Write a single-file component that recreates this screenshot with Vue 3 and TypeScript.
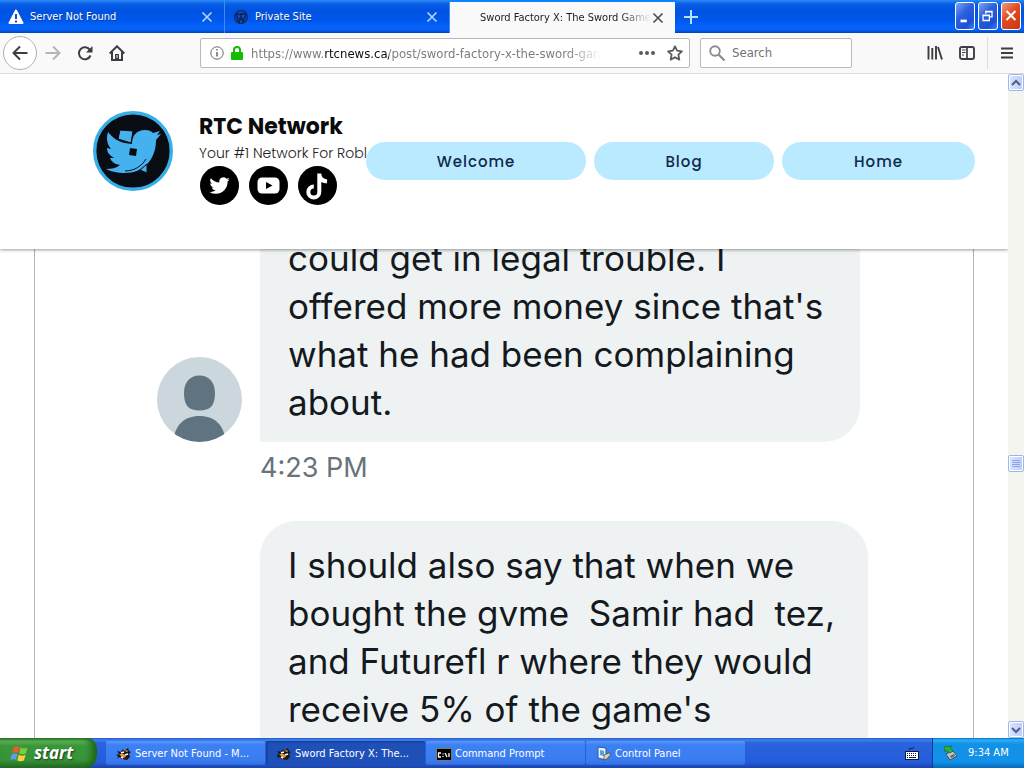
<script setup lang="ts">
import { ref } from 'vue'

interface Message { lines: string[]; time?: string; avatar: boolean }

const address = ref('https://www.rtcnews.ca/post/sword-factory-x-the-sword-game')
const query = ref('')
const active = ref(2)
const tabs = [
  { title: 'Server Not Found', icon: 'warn' },
  { title: 'Private Site', icon: 'wp' },
  { title: 'Sword Factory X: The Sword Game', icon: 'none' },
]
const links = ['Welcome', 'Blog', 'Home']
const messages: Message[] = [
  {
    lines: ['could get in legal trouble. I', "offered more money since that's", 'what he had been complaining', 'about.'],
    time: '4:23 PM',
    avatar: true,
  },
  {
    lines: ['I should also say that when we', 'bought the gvme\u00a0 Samir had\u00a0 tez,', 'and Futurefl\u00a0r where they would', "receive 5% of the game's"],
    avatar: false,
  },
]
const tasks = [
  { title: 'Server Not Found - M...', icon: 'fox', on: false },
  { title: 'Sword Factory X: The...', icon: 'fox', on: true },
  { title: 'Command Prompt', icon: 'cmd', on: false },
  { title: 'Control Panel', icon: 'panel', on: false },
]
</script>

<template>
  <div class="desktop">
    <div class="tabbar">
      <div v-for="(t, i) in tabs" :key="t.title" class="tab" :class="{ active: active === i }">
        <button class="tab-main" @click="active = i">
          <svg v-if="t.icon === 'warn'" class="fav" viewBox="0 0 16 16"><path d="M8 1.5 1.5 14h13z" fill="#fff" stroke="#fff" stroke-width="2" stroke-linejoin="round" /><path d="M8 5v5M8 11.5v2" stroke="#0b50d8" stroke-width="2" /></svg>
          <svg v-else-if="t.icon === 'wp'" class="fav" viewBox="0 0 16 16"><circle cx="8" cy="8" r="6.4" fill="none" stroke="#10285f" stroke-width="1.3" /><path d="M3 5.2 6 13l2-5.5L10 13l2.5-6.3c.5-1.4-.8-2-.4-3.2M2 5h4M6.500 5h4.500M7 5l1 3M10 5" fill="none" stroke="#10285f" stroke-width="1.9" /></svg>
          <span v-else class="fav"></span>
          <span class="tab-title">{{ t.title }}</span>
        </button>
        <button class="close" aria-label="Close tab"><svg viewBox="0 0 12 12"><path d="m1.500 1.500 9 9m0-9-9 9" stroke="currentColor" stroke-width="1.600" /></svg></button>
      </div>
      <button class="plus" aria-label="New tab"><svg viewBox="0 0 14 14"><path d="M7 0v14M0 7h14" stroke="#b9e2ff" stroke-width="2" /></svg></button>
      <div class="winbtns">
        <button aria-label="Minimize"><svg viewBox="0 0 20 27"><path d="M5 19h7" stroke="#fff" stroke-width="3" /></svg></button>
        <button aria-label="Restore"><svg viewBox="0 0 20 27"><path d="M7.500 11V8.500h7v6H12M4.500 12.500h7v6h-7zM7 9h8M4 13h8" fill="none" stroke="#fff" stroke-width="1.400" /></svg></button>
        <button class="red" aria-label="Close"><svg viewBox="0 0 20 27"><path d="m5 8 10 10m0-10L5 18" stroke="#fff" stroke-width="2.200" /></svg></button>
      </div>
    </div>

    <div class="toolbar">
      <button class="back" aria-label="Back"><svg viewBox="0 0 16 16"><path d="M15.500 8H1.500M8 1.500 1.500 8 8 14.500" fill="none" stroke="#3d3d42" stroke-width="2" /></svg></button>
      <button class="tool" aria-label="Forward"><svg viewBox="0 0 16 16"><path d="M.5 8h14M8 1.500 14.500 8 8 14.500" fill="none" stroke="#b5b5b7" stroke-width="2" /></svg></button>
      <button class="tool" aria-label="Reload"><svg viewBox="0 0 16 16"><path d="M13 5A6 6 0 1 0 13.500 10.500" fill="none" stroke="#3d3d42" stroke-width="2" /><path d="M15.500 1v6.500H9z" fill="#3d3d42" /></svg></button>
      <button class="tool" aria-label="Home page"><svg viewBox="0 0 16 16"><path d="M.7 8.500 8 1.300l7.300 7.200M3 7v8h10V7" fill="none" stroke="#3d3d42" stroke-width="2" /><path d="M6 9h4v6H6z" fill="#3d3d42" /><path d="M8 10v3" stroke="#f9f9fa" stroke-width="1" /></svg></button>
      <div class="urlbox">
        <svg class="i14" viewBox="0 0 14 14"><circle cx="7" cy="7" r="6.200" fill="none" stroke="#68686c" /><path d="M7 6v4.500M7 3v1.600" stroke="#68686c" stroke-width="1.500" /></svg>
        <svg class="lock" viewBox="0 0 12 14"><path d="M3 7V4a3 3 0 0 1 6 0v3" fill="none" stroke="#12bc00" stroke-width="2" /><rect y="6" width="12" height="8" rx="1" fill="#12bc00" /></svg>
        <input v-model="address" class="url" aria-label="Address" spellcheck="false" />
        <button class="mini" aria-label="Page actions"><svg viewBox="0 0 16 16"><g fill="#5a5a5e"><circle cx="2" cy="8" r="2" /><circle cx="8" cy="8" r="2" /><circle cx="14" cy="8" r="2" /></g></svg></button>
        <button class="mini" aria-label="Bookmark"><svg viewBox="0 0 16 16"><path d="m8 1.300 2.100 4.400 4.800.6-3.500 3.400.9 4.900L8 12.200l-4.300 2.400.9-4.900L1.100 6.300l4.800-.6z" fill="none" stroke="#5a5a5e" stroke-width="1.800" stroke-linejoin="round" /></svg></button>
      </div>
      <div class="searchbox">
        <svg class="i16" viewBox="0 0 16 16"><circle cx="6" cy="6" r="4.800" fill="none" stroke="#8b8b8e" stroke-width="1.900" /><path d="m9.500 9.500 6 6" stroke="#8b8b8e" stroke-width="2.200" /></svg>
        <input v-model="query" placeholder="Search" aria-label="Search" />
      </div>
      <div class="tools-right">
        <button class="tool" aria-label="Library"><svg viewBox="0 0 16 16"><path d="M1.500 1v13.500M5.300 3v11.500M9 1v13.500M11 2l4 12.500" stroke="#3d3d42" stroke-width="1.900" /></svg></button>
        <button class="tool" aria-label="Sidebars"><svg viewBox="0 0 16 16"><rect x="1" y="2" width="14" height="12" rx="2" fill="none" stroke="#3d3d42" stroke-width="1.900" /><path d="M8 2v12" stroke="#3d3d42" stroke-width="1.700" /><path d="M3 5h3.500M3 7.500h3.500M3 10h2" stroke="#3d3d42" /></svg></button>
        <button class="tool menu" aria-label="Menu"><svg viewBox="0 0 16 16"><path d="M2 3.500h12M2 8h12M2 12.500h12" stroke="#3d3d42" stroke-width="2" /></svg></button>
      </div>
    </div>

    <div class="viewport">
      <div class="page">
        <header class="site-head">
          <svg class="logo" viewBox="0 0 80 80">
            <circle cx="40" cy="40" r="38.300" fill="#0a0c14" stroke="#38aee9" stroke-width="3.400" />
            <path d="M15 21c7 9 14 11 24 12 0-9 5-14 13-14 4 0 6 1 8 3l7-2-3 4 4-1-5 6c0 20-13 33-31 33-8 0-15-2-19-4 6 0 10-1 14-4-6-1-9-4-10-7h4c-5-3-7-6-7-10l4 1c-4-5-5-10-3-17z" fill="#45b1ee" />
            <path d="m27 19 13 1-2 12-13-4z" fill="#45b1ee" stroke="#0a0c14" stroke-width="1" /><path d="m37 37 7 1-1 7-7-1z" fill="#0a0c14" /><path d="M32 60c9 0 17-5 21-12" fill="none" stroke="#0a0c14" stroke-width="1" /><path d="m47 59 7-6v9z" fill="#45b1ee" stroke="#0a0c14" stroke-width="1" />
          </svg>
          <div class="brand">
            <h1>RTC Network</h1>
            <p>Your #1 Network For Robl</p>
            <div class="social">
              <a href="#twitter" aria-label="Twitter"><svg viewBox="0 0 39 39"><circle cx="19.500" cy="19.500" r="19.500" /><path transform="translate(9.500 9.500) scale(.84)" fill="#fff" d="M23.950 4.570a10 10 0 0 1-2.820.780 4.960 4.960 0 0 0 2.160-2.730c-.95.560-2 .970-3.130 1.190a4.920 4.920 0 0 0-8.390 4.490A14 14 0 0 1 1.640 3.160a4.920 4.920 0 0 0 1.520 6.570 4.900 4.900 0 0 1-2.230-.61v.06a4.920 4.920 0 0 0 3.950 4.830 5 5 0 0 1-2.210.080 4.940 4.940 0 0 0 4.600 3.420A9.870 9.870 0 0 1 0 19.540a14 14 0 0 0 7.550 2.210c9.050 0 14-7.500 14-13.980v-.64a10 10 0 0 0 2.400-2.560z" /></svg></a>
              <a href="#youtube" aria-label="YouTube"><svg viewBox="0 0 39 39"><circle cx="19.500" cy="19.500" r="19.500" /><rect x="8.500" y="11.500" width="22" height="16" rx="4.500" fill="#fff" /><path d="m17 16 6.500 3.500L17 23z" /></svg></a>
              <a href="#tiktok" aria-label="TikTok"><svg viewBox="0 0 39 39"><circle cx="19.500" cy="19.500" r="19.500" /><path d="M21.300 7.500v18.500a5.500 5.500 0 1 1-5.500-5.500M21.300 8c.3 4.500 3 7 7.700 7.500" fill="none" stroke="#fff" stroke-width="4" /></svg></a>
            </div>
          </div>
          <nav><a v-for="l in links" :key="l" :href="'#' + l.toLowerCase()">{{ l }}</a></nav>
        </header>
        <main class="article">
          <section v-for="(m, i) in messages" :key="i" class="message">
            <div class="row">
              <svg v-if="m.avatar" class="avatar" viewBox="0 0 85 85"><defs><clipPath id="face"><circle cx="42.500" cy="42.500" r="42.500" /></clipPath></defs><g clip-path="url(#face)"><path d="M0 0h85v85H0z" fill="#ccd6dd" /><path d="M42.500 18.500c9.500 0 15.500 7 15.500 17.500 0 13-5 17.500-15.500 17.500S27 49 27 36c0-10.500 6-17.500 15.500-17.500zM16 85c2-17 11-26 26.500-26S67 68 69 85z" fill="#5f7480" /></g></svg>
              <span v-else class="avatar"></span>
              <p class="bubble" :class="m.avatar ? 'tail' : 'wide'"><span v-for="line in m.lines" :key="line">{{ line }}</span></p>
            </div>
            <time v-if="m.time">{{ m.time }}</time>
          </section>
        </main>
      </div>
      <div class="scroll">
        <button aria-label="Scroll up"><svg viewBox="0 0 10 10"><path d="m1 7 4-4 4 4" fill="none" stroke="#4d6185" stroke-width="2" /></svg></button>
        <div class="above"></div>
        <button aria-label="Scroll position"><svg viewBox="0 0 10 10"><path d="M1 1.500h8M1 3.500h8M1 5.500h8M1 7.500h8" stroke="#8fa6e0" /></svg></button>
        <div class="below"></div>
        <button aria-label="Scroll down"><svg viewBox="0 0 10 10"><path d="m1 3 4 4 4-4" fill="none" stroke="#4d6185" stroke-width="2" /></svg></button>
      </div>
    </div>

    <footer class="taskbar">
      <button class="start">
        <svg viewBox="0 0 18 18"><path d="M3.500 3C6 1.500 7.500 2 9 3L7.500 8.500C6 7.500 4.500 7.500 2 8.500z" fill="#f0592b" /><path d="M10 3.300c2 1.200 4 1.200 6.500 0L15 9c-2.500 1-4.500 1-6.300 0z" fill="#7fcc3c" /><path d="M1.700 9.700c2.500-1 4-1 5.500 0L5.700 15c-1.500-1-3-1-5.500 0z" fill="#5b9cf5" /><path d="M8.300 10.200c2 1.100 4 1.100 6.400 0l-1.500 5.500c-2.500 1-4.500 1-6.300 0z" fill="#fbd137" /></svg>
        start
      </button>
      <div class="tasks">
        <button v-for="t in tasks" :key="t.title" :class="{ on: t.on }">
          <svg v-if="t.icon === 'fox'" viewBox="0 0 16 16"><path d="m1 5 4 1 2-3 1 2 4-3 1 3 2 1-2 2 1 3-3 3-5-1-3-2-2 2 1-3-2-1 3-1z" fill="#1c1714" /><path d="M3 8h5l2 3-3 1M8 5l3-1 1 2" fill="#e39a35" /><path d="m5 7 3-1M9 9l3-1M5 11l2 1" stroke="#fff" stroke-width="1.500" /></svg>
          <svg v-else-if="t.icon === 'cmd'" viewBox="0 0 16 16"><rect x=".5" y="2.500" width="15" height="12" fill="#000" stroke="#777" /><path d="M5 7H2.500v4H5M7 7.500v1M7 10v1M9 7l2 4M13 7v4" fill="none" stroke="#fff" stroke-width="1.300" /></svg>
          <svg v-else viewBox="0 0 16 16"><path d="m2 1 8 1v12l-8-2z" fill="#e9f0fb" stroke="#31549a" /><path d="m4 4 4 1v5L4 9z" fill="#4aa3e8" /><path d="m8 9 5-2 2 1-4 5-3 1z" fill="#d9d4a8" stroke="#444" stroke-width=".7" /></svg>
          <span>{{ t.title }}</span>
        </button>
      </div>
      <svg class="keyb" viewBox="0 0 14 14"><path d="M4 4c0-3 4 0 5-3" fill="none" stroke="#10183c" /><rect x=".5" y="5.500" width="13" height="8" fill="#fff" stroke="#10183c" /><path d="M2 7.500h10M2 9.500h10" stroke="#10183c" stroke-dasharray="1 1" /><path d="M2 11.500h10" stroke="#10183c" stroke-dasharray="1 1 7 1" /></svg>
      <div class="tray">
        <svg viewBox="0 0 16 16"><path d="m3 9 7-3 4 5-7 4z" fill="#bfc8c4" stroke="#465058" /><path d="m7 11 4-2 1 2-4 2z" fill="#5c696e" /><path d="m1 2 8-1-2 2 3 3-3 2-3-3-2 2z" fill="#2fb435" stroke="#14711c" stroke-width=".7" /></svg>
        <time>9:34 AM</time>
      </div>
    </footer>
  </div>
</template>

<style>
body { margin: 0; }
</style>

<style scoped>
* { box-sizing: border-box; }
button, input { font: inherit; margin: 0; padding: 0; border: 0; background: none; color: inherit; outline: 0; }
svg { display: block; flex: none; }
.desktop { height: 100vh; display: flex; flex-direction: column; overflow: hidden; background: #fff; font: 11px/14px "DejaVu Sans Condensed", Tahoma, "Noto Sans", sans-serif; }
.tabbar { flex: none; height: 33px; display: flex; background: linear-gradient(#2a8bf5 0, #0a5fe8 4px, #0053e0 10px, #0057ec 20px, #0564fb 27px, #0560f4 30px, #0040bd 33px); color: #fff; }
.tab { width: 225px; display: flex; align-items: center; padding: 1px 11px 0 8px; border-right: 1px solid #3f8af5; }
.tab-main { flex: 1; min-width: 0; display: flex; align-items: center; gap: 6px; text-align: left; white-space: nowrap; }
.tab-title { overflow: hidden; text-shadow: 1px 1px #0a3c9c; }
.tab.active { background: #f9f9fa; color: #1c1c20; border-top: 2px solid #0a84ff; border-right: 0; padding-top: 0; }
.active .tab-title { text-shadow: none; mask-image: linear-gradient(90deg, #000 82%, transparent); }
.fav { width: 16px; height: 16px; flex: none; }
.close { flex: none; color: #b4d8ff; }
.close svg { width: 12px; height: 12px; }
.active .close { color: #4a4a4f; }
.plus { padding: 0 9px; }
.plus svg { width: 14px; height: 14px; }
.winbtns { margin-left: auto; display: flex; gap: 3px; padding: 2px 3px 0 0; }
.winbtns button { width: 20px; height: 28px; border: 1px solid #fff; border-radius: 3px; background: linear-gradient(135deg, #7ca5f5, #2b60df 40%, #1b51d5 75%, #3c7ffa); }
.winbtns .red { background: linear-gradient(135deg, #f09b80, #df4a21 45%, #c8380f); }
.winbtns svg { width: 100%; height: 100%; }
.toolbar { flex: none; height: 41px; display: flex; align-items: center; background: #f9f9fa; border-bottom: 1px solid #dcdcdd; padding: 0 6px 0 3px; }
.back { width: 34px; height: 34px; border: 1px solid #b1b1b3; border-radius: 50%; display: grid; place-items: center; background: #fff; }
.tool { width: 32px; height: 32px; display: grid; place-items: center; }
.back svg, .tool svg, .mini svg, .i16 { width: 16px; height: 16px; }
.urlbox { flex: 1; min-width: 0; height: 30px; margin-left: 67px; border: 1px solid #b8b8b9; border-radius: 2px; background: #fff; display: flex; align-items: center; padding: 0 6px 0 9px; font-size: 13px; }
.i14 { width: 14px; height: 14px; }
.lock { width: 12px; height: 14px; margin: 0 8px 0 7px; }
.url { flex: 1; min-width: 0; height: 20px; font-size: 13px; color: transparent; caret-color: #222; background: linear-gradient(90deg, #777 73px, #0c0c0d 73px 138px, #777 138px 315px, transparent 350px); background-clip: text; -webkit-background-clip: text; }
.mini { width: 16px; margin-left: 12px; }
.mini:first-of-type { margin-left: 36px; }
.searchbox { width: 152px; height: 30px; margin: 0 67px 0 10px; border: 1px solid #b8b8b9; border-radius: 2px; background: #fff; display: flex; align-items: center; gap: 7px; padding: 0 8px; font-size: 13px; color: #333; }
.searchbox input { flex: 1; min-width: 0; }
.searchbox input::placeholder { color: #737376; opacity: 1; }
.tools-right { display: flex; align-items: center; }
.menu { width: 31px; margin-left: 4px; border-left: 1px solid #dcdcdd; padding-left: 8px; }
.viewport { flex: 1; min-height: 0; display: flex; }
.page { flex: 1; min-width: 0; display: flex; flex-direction: column; overflow: hidden; }
.site-head { position: relative; z-index: 1; flex: none; height: 175px; display: flex; padding: 37px 33px 0 93px; background: #fff; box-shadow: 0 1px 3px #0006; }
.logo { width: 80px; height: 80px; }
.brand { width: 167px; flex: none; margin-left: 26px; }
h1 { margin: 0; font: 700 22px/32px Poppins, Inter, sans-serif; color: #0b0b0b; white-space: nowrap; }
.brand p { margin: 0; font: 300 14px/20px Poppins, Inter, sans-serif; color: #222; white-space: nowrap; }
.social { display: flex; gap: 10px; padding: 3px 0 0 1px; }
.social svg { width: 39px; height: 39px; }
nav { flex: 1; display: grid; grid-template-columns: 220fr 180fr 193fr; gap: 8px; padding-top: 31px; }
nav a { height: 38px; border-radius: 19px; background: #b9eaff; color: #10284c; font: 500 15px/40px Poppins, Inter, sans-serif; letter-spacing: 1px; text-align: center; text-decoration: none; }
.article { flex: 1; min-height: 0; overflow: hidden; margin: 0 34px; border: solid #b5b5b7; border-width: 0 1px; padding-left: 122px; }
.message { display: flex; flex-direction: column; font: 35px/48px Inter, sans-serif; }
.message:first-child { margin-top: -48px; }
.row { display: flex; align-items: flex-end; gap: 18px; }
.avatar { width: 85px; height: 85px; flex: none; }
.bubble { margin: 0; width: 600px; padding: 33px 0 16px 28px; border-radius: 36px; background: #eef2f3; color: #14191d; white-space: nowrap; }
.bubble span { display: block; }
.tail { border-bottom-left-radius: 0; }
.wide { width: 608px; padding: 20px 0 64px 28px; }
.message time { margin: 2px 0 29px 103px; font-size: 27px; color: #68737a; }
.scroll { width: 16px; flex: none; display: flex; flex-direction: column; background: #f5f5f0; }
.scroll button { height: 17px; border: 1px solid #9fb5ec; border-radius: 2px; background: linear-gradient(90deg, #dbe5fe, #b9cbf8); display: grid; place-items: center; box-shadow: inset 0 0 0 1px #fff; }
.scroll svg { width: 10px; height: 10px; }
.above { flex: 364; }
.below { flex: 249; }
.taskbar { flex: none; height: 30px; display: flex; align-items: center; background: linear-gradient(#2357c9 0, #3f80ee 2px, #2a63dc 5px, #245cdb 24px, #1a43ac); color: #fff; }
.start { align-self: stretch; width: 97px; display: flex; align-items: center; gap: 5px; padding: 0 0 0 10px; border-radius: 0 10px 12px 0; background: linear-gradient(#2c7a2c, #5fb75c 3px, #3a963a 8px, #379337 22px, #246b24); box-shadow: inset -5px 0 6px #1d651d; font: italic bold 17px/20px "Noto Sans", "Open Sans", sans-serif; text-shadow: 1px 1px 2px #143c14; }
.start svg { width: 19px; height: 19px; }
.tasks { display: flex; gap: 1px; margin-left: 9px; flex: none; }
.tasks button { width: 159px; height: 24px; display: flex; align-items: center; gap: 3px; padding: 1px 0 0 10px; border-radius: 2px; background: linear-gradient(#5a97fb, #3c81f3 4px, #3a7cf0 20px, #2f6be0); white-space: nowrap; }
.tasks .on { background: #1e50b8; box-shadow: inset 1px 1px 2px #123a8e; }
.tasks svg, .tray svg { width: 16px; height: 16px; }
.keyb { width: 14px; height: 14px; margin: 0 13px 0 auto; }
.tray { align-self: stretch; width: 92px; display: flex; align-items: center; gap: 9px; padding-left: 10px; border-left: 1px solid #0a3b96; background: linear-gradient(#0c70cb, #2cb0f5 2px, #1290e6 6px, #1192ea 24px, #0b68b5); }
</style>
